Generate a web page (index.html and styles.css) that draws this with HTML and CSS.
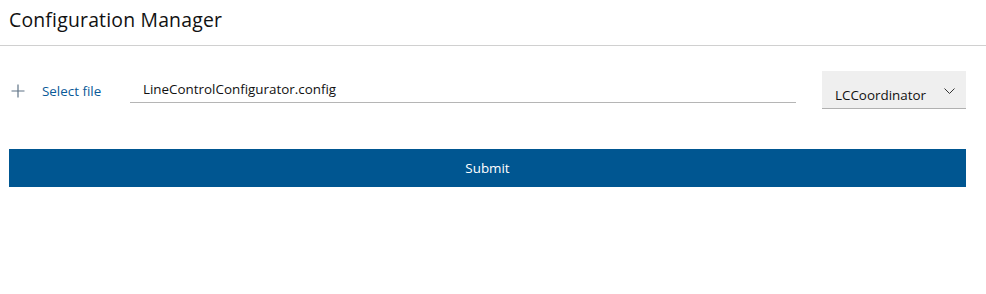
FILE: index.html
```html
<!DOCTYPE html>
<html>
<head>
<meta charset="utf-8">
<link rel="stylesheet" href="styles.css">
</head>
<body>
<header class="header">
  <h1 class="title">Configuration Manager</h1>
</header>
<main class="content">
  <div class="row">
    <button class="select-btn" type="button">
      <svg class="plus" width="14" height="14" viewBox="0 0 14 14"><path d="M7 0.5V13.5M0.5 7H13.5" stroke="#5f7386" stroke-width="1.2" fill="none"/></svg>
      <span class="select-label">Select file</span>
    </button>
    <div class="file-field">LineControlConfigurator.config</div>
    <div class="dropdown">
      <span class="dropdown-label">LCCoordinator</span>
      <svg class="chevron" width="11" height="6" viewBox="0 0 11 6"><path d="M0.5 0.5L5.5 5.5L10.5 0.5" stroke="#333" stroke-width="1" fill="none"/></svg>
    </div>
  </div>
  <button class="submit" type="button">Submit</button>
</main>
</body>
</html>
```
FILE: styles.css
```css
html, body {
  margin: 0;
  padding: 0;
  background: #fff;
  font-family: "Open Sans", "Noto Sans", sans-serif;
  color: #000;
}
.header {
  height: 46px;
  border-bottom: 1px solid #d0d0d0;
  box-sizing: border-box;
  padding: 0 9px;
}
.title {
  margin: 0;
  font-weight: 400;
  font-size: 19.4px;
  line-height: 39px;
  letter-spacing: 0.2px;
  color: #111;
}
.content {
  padding: 25px 20px 0 9px;
}
.row {
  display: flex;
  align-items: flex-start;
  height: 38px;
}
.select-btn {
  display: flex;
  align-items: center;
  gap: 17px;
  width: 121px;
  flex: none;
  background: none;
  border: 0;
  padding: 0 0 0 2px;
  margin-top: 13px;
  height: 14px;
  font: inherit;
  cursor: pointer;
}
.select-label {
  font-size: 13.4px;
  color: #0a5a98;
}
.file-field {
  width: 666px;
  flex: none;
  box-sizing: border-box;
  height: 32px;
  padding: 9px 13px 0;
  border-bottom: 1px solid #b5b5b5;
  font-size: 13.4px;
  color: #111;
}
.dropdown {
  margin-left: 26px;
  width: 144px;
  flex: none;
  height: 38px;
  box-sizing: border-box;
  background: #efefef;
  border-bottom: 1px solid #b0b0b0;
  display: flex;
  align-items: flex-start;
  padding: 0 0 0 13px;
  font-size: 13.4px;
  color: #111;
}
.dropdown-label {
  margin-top: 15px;
}
.chevron {
  margin: 17px 11px 0 auto;
}
.submit {
  display: block;
  margin-top: 40px;
  width: 957px;
  height: 38px;
  background: #005691;
  color: #fff;
  border: 0;
  font: inherit;
  font-size: 13.4px;
  cursor: pointer;
}
```
